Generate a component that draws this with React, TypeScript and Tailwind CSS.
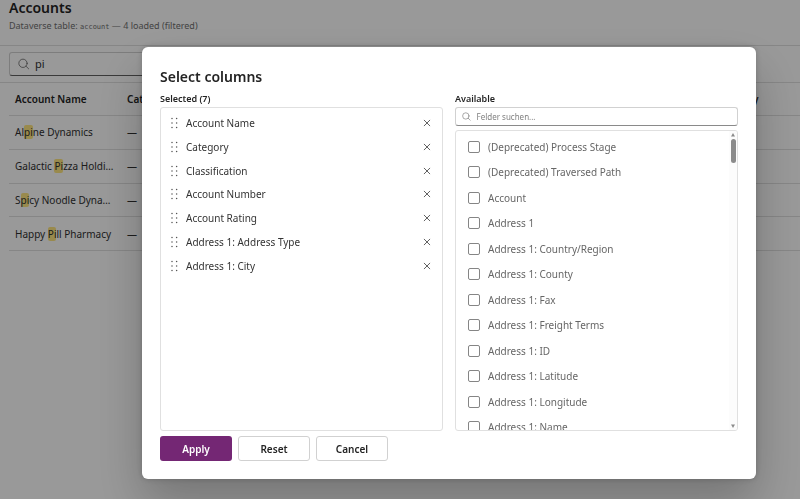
import { Fragment } from "react";

const selected = [
  "Account Name",
  "Category",
  "Classification",
  "Account Number",
  "Account Rating",
  "Address 1: Address Type",
  "Address 1: City",
];

const available = [
  "(Deprecated) Process Stage",
  "(Deprecated) Traversed Path",
  "Account",
  "Address 1",
  "Address 1: Country/Region",
  "Address 1: County",
  "Address 1: Fax",
  "Address 1: Freight Terms",
  "Address 1: ID",
  "Address 1: Latitude",
  "Address 1: Longitude",
  "Address 1: Name",
];

const accounts = [
  "Alpine Dynamics",
  "Galactic Pizza Holdings",
  "Spicy Noodle Dynasty",
  "Happy Pill Pharmacy",
];

function SearchIcon({ className }: { className: string }) {
  return (
    <svg viewBox="0 0 16 16" fill="none" stroke="currentColor" strokeLinecap="round" className={className} aria-hidden="true">
      <circle cx="7.2" cy="7" r="6" />
      <path d="M11.6 11.2 15.4 15" />
    </svg>
  );
}

function DragIcon() {
  return (
    <svg width="8" height="12" viewBox="0 0 8 12" fill="#555555" className="shrink-0" aria-hidden="true">
      {[1.5, 6, 10.5].map((y) => (
        <Fragment key={y}>
          <circle cx="2" cy={y} r="0.75" />
          <circle cx="6.6" cy={y} r="0.75" />
        </Fragment>
      ))}
    </svg>
  );
}

function Highlighted({ text }: { text: string }) {
  return (
    <>
      {text.split(/(pi)/i).map((part, i) =>
        i % 2 === 1 ? (
          <mark key={i} className="rounded-xs bg-[#ffe680] text-inherit">
            {part}
          </mark>
        ) : (
          <Fragment key={i}>{part}</Fragment>
        ),
      )}
    </>
  );
}

function AccountsPage() {
  return (
    <main className="text-[#303030]">
      <header className="h-[46px] border-b border-[#e0e0e0] pl-[9px]">
        <h1 className="text-[14px] leading-4 font-semibold text-[#242424]">Accounts</h1>
        <p className="mt-0.5 text-[9px] leading-4 text-[#707070]">
          Dataverse table: <code className="font-['DejaVu_Sans_Mono',monospace] text-[7px]">account</code> — 4 loaded (filtered)
        </p>
      </header>
      <div className="flex h-[37px] items-center border-b border-[#e0e0e0] px-[9px]">
        <label className="flex h-6 w-60 items-center gap-1.5 rounded-[3px] border border-[#d1d1d1] border-b-[#616161] px-2">
          <SearchIcon className="size-3 text-[#505050]" />
          <input aria-label="Search accounts" defaultValue="pi" className="w-full bg-transparent text-[11px] leading-4 outline-none" />
        </label>
      </div>
      <div className="pl-[9px]">
        <table className="h-[168px] w-full table-fixed text-left text-[10px] leading-4">
          <thead>
            <tr className="border-b border-[#e0e0e0]">
              {selected.map((name, i) => (
                <th key={name} className={`truncate px-1.5 py-2 font-semibold text-[#242424] ${i < selected.length - 1 ? "w-28" : ""}`}>
                  {name}
                </th>
              ))}
            </tr>
          </thead>
          <tbody>
            {accounts.map((name) => (
              <tr key={name} className="border-b border-[#e0e0e0]">
                <td className="truncate px-1.5 py-2">
                  <Highlighted text={name} />
                </td>
                {selected.slice(1).map((column) => (
                  <td key={column} className="px-1.5">
                    —
                  </td>
                ))}
              </tr>
            ))}
          </tbody>
        </table>
      </div>
    </main>
  );
}

function SelectedColumns() {
  return (
    <section className="flex min-w-0 flex-1 flex-col">
      <h3 className="text-[9px] leading-4 font-semibold">Selected (7)</h3>
      <div className="flex-1 rounded-[3px] border border-[#e0e0e0] py-[3px]">
        <ul className="grid h-[167px] auto-rows-fr text-[10px] leading-4 text-[#333333]">
          {selected.map((name) => (
            <li key={name} className="flex items-center gap-2 px-[9px]">
              <DragIcon />
              <span className="flex-1">{name}</span>
              <button type="button" aria-label={`Remove ${name}`} className="flex size-3 items-center justify-center">
                <svg width="8" height="8" viewBox="0 0 8 8" stroke="#505050" strokeWidth="0.9" strokeLinecap="round" aria-hidden="true">
                  <path d="M1.2 1.2 6.8 6.8M6.8 1.2 1.2 6.8" />
                </svg>
              </button>
            </li>
          ))}
        </ul>
      </div>
    </section>
  );
}

function AvailableColumns() {
  return (
    <section className="flex min-w-0 flex-1 flex-col">
      <h3 className="text-[9px] leading-4 font-semibold">Available</h3>
      <label className="flex h-[19px] items-center gap-1.5 rounded-[3px] border border-[#d1d1d1] border-b-[#8a8a8a] px-1.5">
        <SearchIcon className="size-[9px] text-[#616161]" />
        <input
          aria-label="Felder suchen"
          placeholder="Felder suchen..."
          className="w-full bg-transparent text-[8px] leading-4 outline-none placeholder:text-[#808080]"
        />
      </label>
      <div className="mt-1 flex min-h-0 flex-1 overflow-hidden rounded-[3px] border border-[#e0e0e0]">
        <ul className="mt-[3px] grid h-[306px] flex-1 auto-rows-fr text-[10px] leading-4 text-[#666666]">
          {available.map((name) => (
            <li key={name} className="flex pl-3">
              <label className="flex items-center gap-2">
                <input type="checkbox" className="size-3 appearance-none rounded-xs border border-[#858585] checked:bg-[#742774]" />
                {name}
              </label>
            </li>
          ))}
        </ul>
        <div className="flex w-2 flex-col items-center bg-[#fcfcfc] py-0.5" aria-hidden="true">
          <svg width="4" height="4" viewBox="0 0 4 4" fill="#8a8a8a">
            <path d="M2 0 4 3.5H0Z" />
          </svg>
          <div className="mt-0.5 h-6 w-[5px] rounded-full bg-[#8b8b8b]" />
          <svg width="4" height="4" viewBox="0 0 4 4" fill="#8a8a8a" className="mt-auto">
            <path d="M0 0.5H4L2 4Z" />
          </svg>
        </div>
      </div>
    </section>
  );
}

const secondary =
  "h-[25px] w-18 rounded-[3px] border border-[#d1d1d1] bg-white text-[10px] leading-4 font-semibold text-[#242424]";

export default function App() {
  return (
    <div className="h-screen overflow-hidden bg-white font-['Noto_Sans','Open_Sans',sans-serif]">
      <AccountsPage />
      <div className="fixed inset-0 flex bg-black/40 pt-[47px] pr-11 pb-5 pl-[142px]">
        <div
          role="dialog"
          aria-modal="true"
          aria-labelledby="dialog-title"
          className="flex min-w-0 flex-1 flex-col rounded-md bg-white px-[18px] pt-5 pb-[18px] text-[#242424] shadow-[0_0_6px_rgba(0,0,0,0.2),0_24px_48px_rgba(0,0,0,0.24)]"
        >
          <h2 id="dialog-title" className="text-[14px] leading-5 font-semibold">
            Select columns
          </h2>
          <div className="mt-1 flex min-h-0 flex-1 gap-3">
            <SelectedColumns />
            <AvailableColumns />
          </div>
          <div className="mt-[5px] flex gap-1.5">
            <button type="button" className="h-[25px] w-18 rounded-[3px] bg-[#742774] text-[10px] leading-4 font-semibold text-white">
              Apply
            </button>
            <button type="button" className={secondary}>
              Reset
            </button>
            <button type="button" className={secondary}>
              Cancel
            </button>
          </div>
        </div>
      </div>
    </div>
  );
}
